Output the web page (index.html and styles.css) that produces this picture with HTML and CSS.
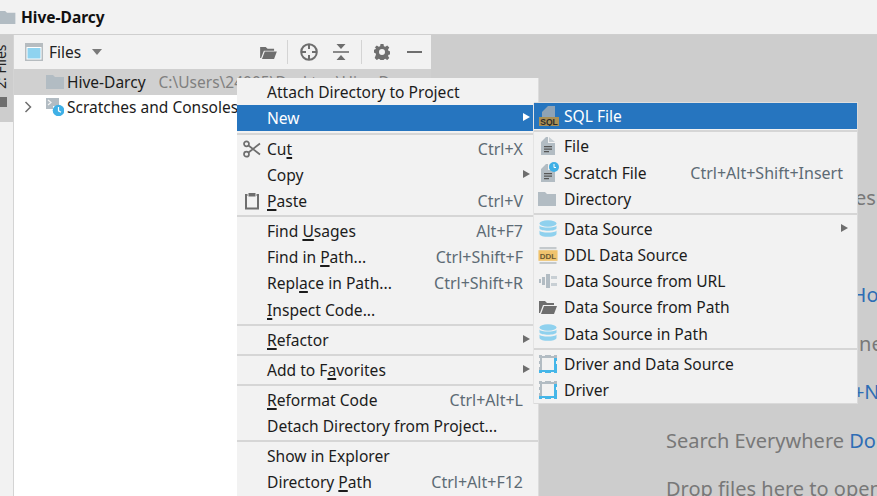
FILE: index.html
```html
<!DOCTYPE html>
<html lang="en">
<head>
<meta charset="utf-8">
<title>Hive-Darcy</title>
<link rel="stylesheet" href="styles.css">
</head>
<body>
<svg class="sprite" width="0" height="0" aria-hidden="true">
  <symbol id="folder" viewBox="0 0 18 14"><path d="M0 0h7l2 2h9v12H0z" fill="#b2bcc3"/></symbol>
  <symbol id="open" viewBox="0 0 18 14"><path d="M0 13V1h6l2 2h7v2H4L1 13zM2 14l3-8h13l-3 8z" fill="#6e6e6e"/></symbol>
  <symbol id="doc" viewBox="0 0 14 18"><path d="M7 0v6h7v12H0V5l5-5z" fill="#b2bcc3"/><path d="M8 0l6 5H8z" fill="#c8cfd4"/><path d="M3 9h8v1.300H3zM3 11.500h8v1.300H3zM3 14h5v1.300H3z" fill="#555"/></symbol>
  <symbol id="db" viewBox="0 0 18 18"><ellipse cx="9" cy="3.500" rx="8.500" ry="3.200" fill="#8fd1ee"/><path d="M.5 5.500c1 2.800 16 2.800 17 0v3c-1 3-16 3-17 0zM.5 10.500c1 2.800 16 2.800 17 0v3.500c-1 3.800-16 3.800-17 0z" fill="#8fd1ee"/></symbol>
  <symbol id="driver" viewBox="0 0 18 18"><path d="M0 0h3v1h3V0h6v1h3V0h3v3h-3V3H3v12H0v-3h1V9H0V6h1V3H0z" fill="#b2bcc3"/><path d="M15 3h3v3h-1v3h1v9h-3v-1h-3v1H6v-1H3v1H0v-3h3v0h12z" fill="#45b6e8"/></symbol>
</svg>
<div class="app">
  <header class="titlebar">
    <svg class="title-icon"><use href="#folder"/></svg>
    <span class="title-text">Hive-Darcy</span>
  </header>
  <main class="workspace">
    <aside class="strip">
      <div class="strip-tab">
        <span class="strip-label">2: Files</span>
        <span class="strip-square"></span>
      </div>
    </aside>
    <section class="panel">
      <div class="panel-head">
        <svg class="view-icon" viewBox="0 0 18 18"><rect width="18" height="18" fill="#b6bcc0"/><rect x="1.500" y="4" width="15" height="12.500" fill="#fff"/><rect x="2.500" y="5" width="13" height="10.500" fill="#8fd3f0"/></svg>
        <span class="panel-title">Files</span>
        <span class="drop"></span>
        <span class="spring"></span>
        <svg class="tool tool-open"><use href="#open"/></svg>
        <span class="tool-sep"></span>
        <svg class="tool tool-target" viewBox="0 0 18 18" fill="none" stroke="#6e6e6e" stroke-width="2"><circle cx="9" cy="9" r="7.800"/><path d="M9 1v5M9 12v5M1 9h5M12 9h5"/></svg>
        <svg class="tool tool-collapse" viewBox="0 0 16 16"><path d="M0 7.200h16v1.600H0z" fill="#6e6e6e"/><path d="M3.500 0h9L8 5zM3.500 16h9L8 11z" fill="#6e6e6e"/></svg>
        <span class="tool-sep tool-sep-b"></span>
        <svg class="tool tool-gear" viewBox="0 0 16 16"><path fill="#6e6e6e" fill-rule="evenodd" d="M6.500 0h3l.4 2.200 1.400.6L13.200 1.500l2.100 2.100-1.300 1.900.6 1.400 2.200.4v3l-2.200.4-.6 1.400 1.300 1.900-2.100 2.100-1.900-1.300-1.400.6-.4 1.600h-3l-.4-1.600-1.400-.6-1.900 1.300-2.100-2.100L2 10.500l-.6-1.400L0 8.700v-3l1.400-.4.600-1.400L.7 3.600l2.100-2.100 1.900 1.300 1.400-.6zM8 5a3 3 0 100 6 3 3 0 000-6z"/></svg>
        <span class="tool-minus"></span>
      </div>
      <div class="tree">
        <div class="tree-row tree-row-active">
          <svg class="tree-folder"><use href="#folder"/></svg>
          <span class="tree-name">Hive-Darcy</span>
          <span class="tree-path">C:\Users\24005\Desktop\Hive-Darcy</span>
        </div>
        <div class="tree-row">
          <svg class="tree-chevron" viewBox="0 0 8 12" fill="none" stroke="#6e6e6e" stroke-width="1.500"><path d="M1.500 1l5 5-5 5"/></svg>
          <svg class="tree-scratch" viewBox="0 0 18 18"><path d="M0 0h13v8H7v3H0z" fill="#b2bcc3"/><path d="M2 2l3 2.500L2 7" fill="none" stroke="#f2f2f2" stroke-width="1.200"/><circle cx="12.500" cy="12.500" r="5.800" fill="#3fb0e6"/><path d="M12.500 9v3.800l2.500 1.500" fill="none" stroke="#fff" stroke-width="1.200"/></svg>
          <span class="tree-name">Scratches and Consoles</span>
        </div>
      </div>
    </section>
    <section class="editor">
      <p class="hint hint-a">Manage Data Sources</p>
      <p class="hint hint-b">Recent Files <span class="key">Ctrl+E</span></p>
      <p class="hint hint-c">Navigation Bar <span class="key">Alt+Home</span></p>
      <p class="hint hint-d">Go to Line</p>
      <p class="hint hint-e">Go to File <span class="key">Ctrl+Shift+N</span></p>
      <p class="hint hint-f">Search Everywhere <span class="key">Double Shift</span></p>
      <p class="hint hint-f">Drop files here to open</p>
    </section>
  </main>
</div>

<nav class="menu menu-main">
  <div class="item"><span class="label">Attach Directory to Project</span></div>
  <div class="item item-on"><span class="label">New</span><span class="arrow"></span></div>
  <div class="sep sep-wide"></div>
  <div class="item">
    <svg class="ico ico-main" viewBox="0 0 18 18" fill="none" stroke="#6e6e6e" stroke-width="1.700"><circle cx="3.500" cy="3.800" r="2.500"/><circle cx="3.500" cy="14.200" r="2.500"/><path d="M5.500 5.500L17 14.500M5.500 12.500L17 3.500"/></svg>
    <span class="label">Cu<u>t</u></span><span class="short">Ctrl+X</span>
  </div>
  <div class="item"><span class="label">Copy</span><span class="arrow"></span></div>
  <div class="item">
    <svg class="ico ico-main" viewBox="0 0 18 18" fill="none" stroke="#6e6e6e" stroke-width="2"><path d="M4.500 3H3v13.500h12V3h-1.500"/><path d="M5.500 1h7v3.500h-7z" fill="#6e6e6e" stroke="none"/></svg>
    <span class="label"><u>P</u>aste</span><span class="short">Ctrl+V</span>
  </div>
  <div class="sep"></div>
  <div class="item"><span class="label">Find <u>U</u>sages</span><span class="short">Alt+F7</span></div>
  <div class="item"><span class="label">Find in <u>P</u>ath...</span><span class="short">Ctrl+Shift+F</span></div>
  <div class="item"><span class="label">Repl<u>a</u>ce in Path...</span><span class="short">Ctrl+Shift+R</span></div>
  <div class="item item-tall"><span class="label"><u>I</u>nspect Code...</span></div>
  <div class="sep"></div>
  <div class="item"><span class="label"><u>R</u>efactor</span><span class="arrow"></span></div>
  <div class="sep"></div>
  <div class="item"><span class="label">Add to F<u>a</u>vorites</span><span class="arrow"></span></div>
  <div class="sep"></div>
  <div class="item"><span class="label"><u>R</u>eformat Code</span><span class="short">Ctrl+Alt+L</span></div>
  <div class="item"><span class="label">Detach Directory from Project...</span></div>
  <div class="sep"></div>
  <div class="item"><span class="label">Show in Explorer</span></div>
  <div class="item"><span class="label">Directory <u>P</u>ath</span><span class="short">Ctrl+Alt+F12</span></div>
</nav>

<nav class="menu menu-sub">
  <div class="item item-on">
    <svg class="ico ico-sql" viewBox="0 0 20 20"><path d="M9 0h7v11H3V6z" fill="#8fa3b5"/><rect y="11" width="20" height="9" fill="#a98f55"/><text x="10" y="18.600" class="ico-text">SQL</text></svg>
    <span class="label">SQL File</span>
  </div>
  <div class="sep"></div>
  <div class="item"><svg class="ico ico-doc"><use href="#doc"/></svg><span class="label">File</span></div>
  <div class="item item-tall">
    <span class="ico-stack">
      <svg class="ico-doc-b"><use href="#doc"/></svg>
      <svg class="ico-badge" viewBox="0 0 10 10"><circle cx="5" cy="5" r="5" fill="#3fb0e6"/><path d="M5 2v3.500h2" fill="none" stroke="#fff"/></svg>
    </span>
    <span class="label">Scratch File</span><span class="short">Ctrl+Alt+Shift+Insert</span>
  </div>
  <div class="item"><svg class="ico ico-folder"><use href="#folder"/></svg><span class="label">Directory</span></div>
  <div class="sep"></div>
  <div class="item"><svg class="ico ico-db"><use href="#db"/></svg><span class="label">Data Source</span><span class="arrow"></span></div>
  <div class="item">
    <svg class="ico ico-ddl" viewBox="0 0 18 16"><path d="M1 0h16v2H1zM1 14h16v2H1z" fill="#c4c9cc"/><rect y="3" width="18" height="10" fill="#f0c36d"/><text x="9" y="11.200" class="ico-text ico-text-ddl">DDL</text></svg>
    <span class="label">DDL Data Source</span>
  </div>
  <div class="item">
    <svg class="ico ico-plug" viewBox="0 0 18 14"><path d="M0 5h2v4H0zM3 3h3v8H3zM7 0h4v14H7z" fill="#b2bcc3"/><path d="M12 2h6v3h-6zM12 9h6v3h-6z" fill="#c8cfd4"/></svg>
    <span class="label">Data Source from URL</span>
  </div>
  <div class="item"><svg class="ico ico-open"><use href="#open"/></svg><span class="label">Data Source from Path</span></div>
  <div class="item item-tall"><svg class="ico ico-db"><use href="#db"/></svg><span class="label">Data Source in Path</span></div>
  <div class="sep"></div>
  <div class="item"><svg class="ico ico-db"><use href="#driver"/></svg><span class="label">Driver and Data Source</span></div>
  <div class="item"><svg class="ico ico-db"><use href="#driver"/></svg><span class="label">Driver</span></div>
</nav>
</body>
</html>
```
FILE: styles.css
```css
* { box-sizing: border-box; }
html, body { margin: 0; width: 877px; height: 496px; overflow: hidden; }
body { position: relative; background: #f2f2f2; font-family: "Noto Sans", sans-serif; font-size: 15.600px; color: #1c1c1c; }
.sprite { position: absolute; }
svg { display: block; flex: none; }

.app { display: flex; flex-direction: column; height: 496px; }
.titlebar { height: 35px; flex: none; display: flex; align-items: center; background: #f2f2f2; border-bottom: 1px solid #cfcfcf; }
.title-icon { width: 18px; height: 13px; margin-left: -2px; }
.title-text { margin-left: 5px; font-weight: 700; font-size: 15.500px; color: #111; }

.workspace { flex: 1; display: flex; min-height: 0; }
.strip { width: 14px; flex: none; background: #f2f2f2; border-right: 1px solid #d4d4d4; overflow: hidden; }
.strip-tab { width: 13px; height: 87px; background: #cdcdcd; padding-top: 11px; overflow: hidden; }
.strip-label { display: block; writing-mode: vertical-rl; transform: rotate(180deg); font-size: 14px; line-height: 14px; height: 43px; margin-left: -6px; color: #222; white-space: nowrap; }
.strip-square { display: block; width: 7px; height: 10px; margin-top: 8px; background: #6e6e6e; }

.panel { width: 417px; flex: none; display: flex; flex-direction: column; background: #fff; }
.panel-head { height: 34px; flex: none; display: flex; align-items: center; background: #f2f2f2; }
.view-icon { width: 18px; height: 18px; margin-left: 11px; }
.panel-title { margin-left: 6px; font-size: 15.500px; color: #222; }
.drop { width: 0; height: 0; margin-left: 11px; border-left: 5.500px solid transparent; border-right: 5.500px solid transparent; border-top: 6px solid #7a7a7a; }
.spring { flex: 1; }
.tool { width: 16px; height: 16px; }
.tool-open { height: 13px; width: 17px; }
.tool-sep { width: 1px; height: 24px; margin: 0 12px 0 10px; background: #d4d4d4; }
.tool-target { width: 18px; height: 18px; }
.tool-collapse { margin-left: 15px; }
.tool-sep-b { margin-left: 12px; }
.tool-minus { width: 15px; height: 2px; margin: 0 9px 0 17px; background: #6e6e6e; }

.tree { flex: 1; }
.tree-row { height: 24px; display: flex; align-items: center; white-space: nowrap; overflow: hidden; font-size: 15.500px; }
.tree-row-active { height: 26px; background: #d0d0d0; }
.tree-folder { width: 18px; height: 14px; margin-left: 32px; }
.tree-chevron { width: 8px; height: 12px; margin-left: 10px; }
.tree-scratch { width: 18px; height: 18px; margin-left: 14px; }
.tree-name { margin-left: 3px; color: #1c1c1c; }
.tree-path { margin-left: 13px; color: #808080; }

.editor { flex: 1; min-width: 0; background: #cdcdcd; overflow: hidden; padding-top: 139px; font-size: 20px; color: #787878; white-space: nowrap; }
.hint { margin: 0; height: 48.500px; line-height: 48.500px; }
.key { color: #2f6db5; }
.hint-a { margin-left: 240px; }
.hint-b { margin-left: 240px; }
.hint-c { margin-left: 239px; }
.hint-d { margin-left: 356px; }
.hint-e { margin-left: 241px; }
.hint-f { margin-left: 235px; }

.menu { position: absolute; background: #f2f2f2; }
.menu-main { left: 237px; top: 78px; width: 301px; height: 420px; padding-top: 1px; box-shadow: 1px 0 0 #dcdcdc; }
.menu-sub { left: 534px; top: 103px; width: 324px; border: 1px solid #dadada; border-top: 0; border-left: 0; height: 301px; box-shadow: -1px 0 0 #e4e4e4, 0 -1px 0 #dedede; }
.item { position: relative; height: 26px; display: flex; align-items: center; padding-left: 30px; padding-right: 15px; white-space: nowrap; }
.menu-sub .item { padding-right: 14px; }
.item-tall { height: 27px; }
.item-on { background: #2675bf; color: #fff; }
.label { flex: 1; }
.short { color: #5d6b75; font-size: 16px; }
.arrow { position: absolute; right: 8px; top: 8px; width: 0; height: 0; border-left: 7px solid #6e6e6e; border-top: 4.500px solid transparent; border-bottom: 4.500px solid transparent; }
.item-on .arrow { border-left-color: #fff; }
.menu-sub .arrow { right: 9px; }
.sep { height: 4px; display: flex; align-items: center; }
.sep::before { content: ""; flex: 1; height: 2px; background: #d6d6d6; }
.sep-wide { height: 5px; }
u { text-decoration-thickness: 1.500px; text-underline-offset: 1.500px; }

.ico { position: absolute; }
.ico-main { left: 6px; top: 4px; width: 18px; height: 18px; }
.ico-sql { left: 5px; top: 3px; width: 20px; height: 20px; }
.ico-ddl { left: 4px; top: 5px; width: 20px; height: 17px; }
.ico-plug { left: 5px; top: 6px; width: 18px; height: 14px; }
.ico-doc { left: 7px; top: 4px; width: 14px; height: 18px; }
.ico-folder { left: 4px; top: 6px; width: 18px; height: 14px; }
.ico-db { left: 5px; top: 4px; width: 18px; height: 18px; }
.ico-open { left: 5px; top: 6px; width: 18px; height: 14px; }
.ico-stack { position: absolute; left: 7px; top: 3px; width: 20px; height: 20px; }
.ico-doc-b { position: absolute; left: 0; top: 2px; width: 14px; height: 18px; }
.ico-badge { position: absolute; left: 8px; top: 0; width: 10px; height: 10px; }
.ico-text { font-family: "Liberation Sans", sans-serif; font-size: 8.500px; font-weight: 700; fill: #2b2b2b; text-anchor: middle; }
.ico-text-ddl { font-size: 7.500px; fill: #6b5a33; }
```
